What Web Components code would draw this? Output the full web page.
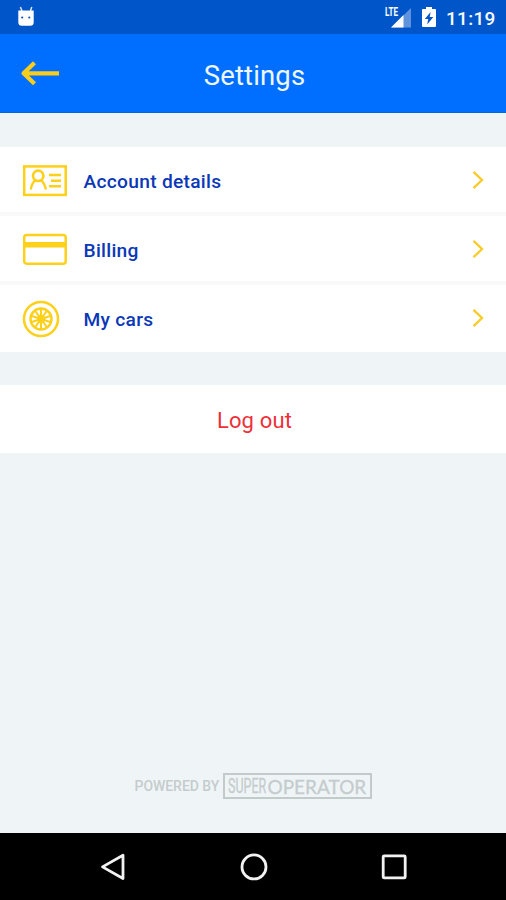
<!DOCTYPE html>
<html lang="en">
<head>
<meta charset="utf-8">
<title>Settings</title>
<style>
html,body{margin:0;height:100%;overflow:hidden}
body{font-family:Roboto,"Liberation Sans",sans-serif;background:#eff5f6}
</style>
</head>
<body>
<settings-screen></settings-screen>
<script>
const define = (name, markup) => customElements.define(name, class extends HTMLElement {
  constructor() {
    super();
    this.attachShadow({ mode: 'open' }).innerHTML = markup;
  }
});

define('status-bar', `
<style>
:host{display:flex;height:34px;box-sizing:border-box;background:#0055c8;color:#f4f8ff;align-items:center;padding:0 11px 0 17px}
svg{display:block;flex:none}
.gap{flex:1}
.batt{margin:0 10px 0 11px}
.time{font-size:19px;font-weight:500;line-height:32px;padding-top:3px;letter-spacing:.3px;width:49px;white-space:nowrap}
</style>
<svg width="18" height="22" viewBox="0 0 18 22"><path d="M3.4 1 5 5M14.8 1 13.4 5" stroke="#dce9fb" stroke-width="1.5"/><path d="M1.3 4.5h15.4v11.7q0 3.5-3.5 3.5H4.8q-3.5 0-3.5-3.5z" fill="#fff"/><circle cx="5.2" cy="11.5" r="1.1" fill="#0055c8"/><circle cx="12.3" cy="11.5" r="1.1" fill="#0055c8"/></svg>
<span class="gap"></span>
<svg width="26" height="24" viewBox="0 0 26 24"><path d="M26 3v19.5H6z" fill="#5f94dc"/><path d="M18.5 10v12.5H6z" fill="#fff"/><path d="M0 2h14v11H0z" fill="#0055c8"/><text x="0" y="10.8" font-size="12" font-weight="700" fill="#fff" textLength="13" lengthAdjust="spacingAndGlyphs">LTE</text></svg>
<svg class="batt" width="14" height="22" viewBox="0 0 14 22"><path d="M4 1h6v2h3q1 0 1 1v16q0 1-1 1H1q-1 0-1-1V4q0-1 1-1h3z" fill="#fff"/><path d="M8.6 6 2.8 13H6.2L5.2 18.5 11.3 11H7.7z" fill="#0055c8"/></svg>
<span class="time">11:19</span>`);

define('app-header', `
<style>
:host{display:grid;grid-template-columns:80px 1fr 80px;height:78.5px;align-items:center;background:#006fff;color:#eef7ff;box-sizing:border-box;border-bottom:1px solid #0867d8}
svg{display:block;margin:1px 0 0 19px}
.title{font-size:27.5px;line-height:34px;text-align:center;padding:6px 0 0 3px;letter-spacing:.15px}
</style>
<svg width="42" height="28" viewBox="0 0 42 28"><path d="M40 14.3H4.5M15.5 3.8 4.6 14.3 15.5 24.8" fill="none" stroke="#f9cd1b" stroke-width="4.3" stroke-linejoin="round"/></svg>
<div class="title"><slot></slot></div>`);

define('menu-row', `
<style>
:host{display:flex;box-sizing:border-box;align-items:center;background:#fff;padding:3px 21px 0 21px;color:#0b38b8}
.icon{width:62.5px;flex:none}
.label{flex:1;font-size:19.2px;font-weight:500;line-height:26px;padding-top:2px;white-space:nowrap;letter-spacing:.28px}
svg,::slotted(svg){display:block}
.go{margin-top:-1px}
</style>
<div class="icon"><slot name="icon"></slot></div>
<div class="label"><slot></slot></div>
<svg class="go" width="14" height="20" viewBox="0 0 14 20"><path d="M2.5 1.8 11 10 2.5 18.2" fill="none" stroke="#f8cc2d" stroke-width="2.4"/></svg>`);

define('menu-list', `
<style>
:host{display:grid;grid-template-rows:65px 65px 67px;gap:4px;background:#f9f9f9}
::slotted(:last-child){padding-top:1px}
</style><slot></slot>`);

define('logout-button', `
<style>
:host{display:flex;height:67.5px;align-items:center;justify-content:center;background:#fff;color:#ee3038;font-size:22px}
span{padding:3px 0 0 3px;letter-spacing:.15px}
</style><span><slot></slot></span>`);

define('powered-by', `
<style>
:host{display:flex;justify-content:center;align-items:center;gap:6px;height:28px;color:#c5cccd;white-space:nowrap}
.by{font-size:14px;font-weight:500;width:82px;line-height:26px;letter-spacing:-.05px}
.logo{display:flex;box-sizing:border-box;width:149px;height:26px;border:2px solid #c3caca;padding-left:3.5px;font-size:19.5px;line-height:23px}
.super{width:39.5px}
.super span{display:inline-block;transform:scaleX(.64);transform-origin:0 50%;-webkit-text-stroke:.3px #c5cccd}
.operator{font-family:Lato,sans-serif;font-size:19px;-webkit-text-stroke:.3px #c5cccd}
</style>
<span class="by">POWERED BY</span>
<div class="logo"><div class="super"><span>SUPER</span></div><div class="operator">OPERATOR</div></div>`);

define('nav-bar', `
<style>
:host{display:flex;justify-content:space-between;align-items:center;height:67px;box-sizing:border-box;padding:0 98px 0 99px;background:#000}
svg{display:block}
</style>
<svg width="28" height="30" viewBox="0 0 28 30"><path d="M24 3.3v23.2L3.5 14.9z" fill="none" stroke="#f2f2f2" stroke-width="2.8" stroke-linejoin="round"/></svg>
<svg width="28" height="30" viewBox="0 0 28 30"><circle cx="14" cy="14.9" r="12" fill="none" stroke="#f2f2f2" stroke-width="2.8"/></svg>
<svg width="28" height="30" viewBox="0 0 28 30"><rect x="3.2" y="3.9" width="22" height="22" rx="1" fill="none" stroke="#f2f2f2" stroke-width="2.8"/></svg>`);

const spokes = Array.from({ length: 10 }, (_, i) =>
  `<path d="M20 20V9.5" transform="rotate(${i * 36} 20 20)"/>`).join('');

define('settings-screen', `
<style>
:host{display:flex;flex-direction:column;width:506px;height:900px;background:#eff5f6;overflow:hidden}
menu-list{margin-top:34px}
logout-button{margin-top:33.5px}
powered-by{margin-top:auto;margin-bottom:33px}
menu-row svg{fill:none;stroke:#fdd019;stroke-width:2.5}
</style>
<status-bar></status-bar>
<app-header>Settings</app-header>
<menu-list>
<menu-row>Account details<svg slot="icon" width="48" height="36" viewBox="0 0 48 36"><rect x="3.2" y="3.4" width="41.5" height="28.5"/><circle cx="17.2" cy="12.8" r="5.2" stroke-width="2.7"/><path d="M9.8 26.5Q11 19.5 14.5 17.3M25 26.5Q23.2 19.5 19.9 17.3M28 12h12M30 17.7h10M28 23.3h12" stroke-width="2.4"/></svg></menu-row>
<menu-row>Billing<svg slot="icon" width="48" height="36" viewBox="0 0 48 36"><rect x="3.2" y="2.9" width="41.5" height="28.8" rx="2.5"/><path d="M3 12.7h42" stroke-width="5.5"/></svg></menu-row>
<menu-row>My cars<svg slot="icon" width="40" height="40" viewBox="0 0 40 40"><circle cx="20" cy="20" r="17"/><circle cx="20" cy="20" r="10.5" stroke-width="2.4"/><g stroke-width="2.1">${spokes}</g><circle cx="20" cy="20" r="2.8" fill="#fdd019"/></svg></menu-row>
</menu-list>
<logout-button>Log out</logout-button>
<powered-by></powered-by>
<nav-bar></nav-bar>`);
</script>
</body>
</html>
